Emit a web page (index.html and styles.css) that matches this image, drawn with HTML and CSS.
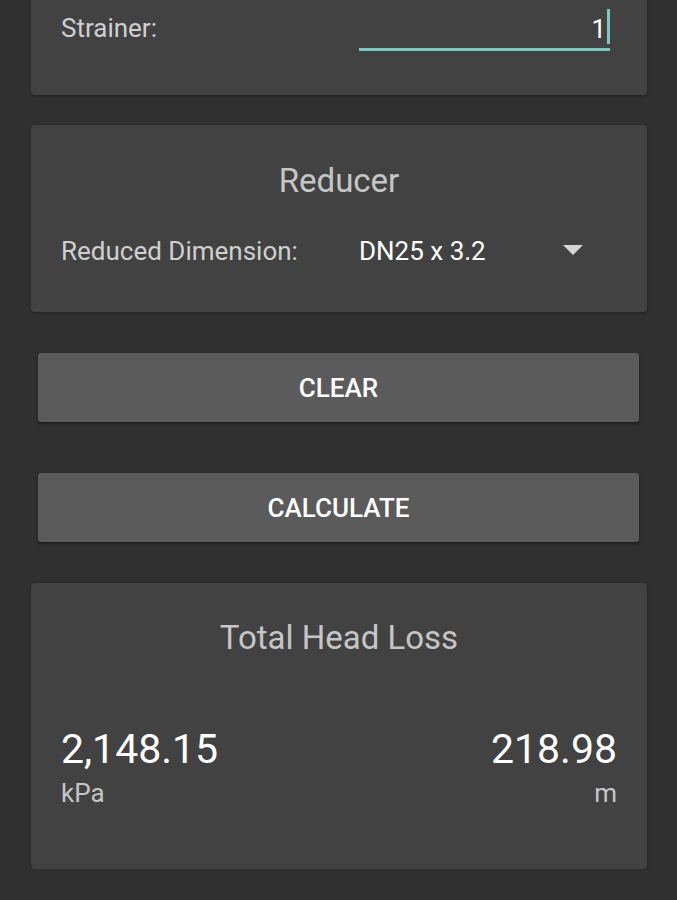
FILE: index.html
```html
<!DOCTYPE html>
<html lang="en">
<head>
  <meta charset="UTF-8" />
  <meta name="viewport" content="width=device-width, initial-scale=1.0" />
  <title>Head Loss</title>
  <link rel="stylesheet" href="styles.css">
</head>
<body>
  <div class="page">
    <div class="card card-fittings">
      <div class="row">
        <label class="label">Strainer:</label>
        <div class="field">
          <span class="field-value">1</span>
          <span class="caret"></span>
        </div>
      </div>
    </div>

    <div class="card card-reducer">
      <h2 class="card-title">Reducer</h2>
      <div class="row">
        <label class="label">Reduced Dimension:</label>
        <div class="spinner">
          <span class="spinner-value">DN25 x 3.2</span>
          <span class="spinner-arrow"></span>
        </div>
      </div>
    </div>

    <button class="btn btn-clear">Clear</button>
    <button class="btn btn-calc">Calculate</button>

    <div class="card card-result">
      <h2 class="card-title">Total Head Loss</h2>
      <div class="results">
        <div class="result">
          <div class="result-value">2,148.15</div>
          <div class="result-unit">kPa</div>
        </div>
        <div class="result result-right">
          <div class="result-value">218.98</div>
          <div class="result-unit">m</div>
        </div>
      </div>
    </div>
  </div>
</body>
</html>
```

FILE: styles.css
```css
body {
  margin: 0;
  background-color: #303030;
  font-family: Roboto, "Noto Sans", sans-serif;
  color: #d2d2d2;
}
.page {
  margin-top: -16px;
  padding: 0 30px 0 31px;
  display: flex;
  flex-direction: column;
}
.card {
  background-color: #424242;
  border-radius: 4px;
  box-shadow: 0 1px 3px rgba(0, 0, 0, 0.35);
  padding: 0 30px;
}
.card-fittings {
  padding-top: 25px;
  padding-bottom: 44px;
}
.card-reducer {
  margin-top: 30px;
  padding-top: 36px;
  padding-bottom: 46px;
}
.card-title {
  margin: 0;
  font-size: 33px;
  line-height: 40px;
  font-weight: 400;
  text-align: center;
  color: #c6c6c6;
}
.row {
  display: grid;
  grid-template-columns: 298px 1fr;
  align-items: start;
}
.card-reducer .row {
  margin-top: 35px;
}
.label {
  font-size: 26px;
  line-height: 30px;
  color: #d0d0d0;
}
.card-fittings .label {
  padding-top: 4px;
}
.field {
  display: flex;
  justify-content: flex-end;
  align-items: flex-end;
  margin-right: 7px;
  padding-bottom: 4px;
  border-bottom: 3px solid #7ccac1;
}
.field-value {
  font-size: 26px;
  line-height: 30px;
  color: #ffffff;
}
.caret {
  width: 3px;
  height: 35px;
  margin-left: 1px;
  background-color: #7ccac1;
}
.spinner {
  display: flex;
  align-items: center;
  justify-content: space-between;
  padding-right: 34px;
}
.spinner-value {
  font-size: 26px;
  line-height: 30px;
  color: #ffffff;
}
.spinner-arrow {
  width: 0;
  height: 0;
  border-left: 10px solid transparent;
  border-right: 10px solid transparent;
  border-top: 10px solid #d6d6d6;
  margin-top: -2px;
}
.btn {
  margin: 41px 8px 0 7px;
  height: 69px;
  background-color: #5b5b5c;
  color: #ffffff;
  border: none;
  border-radius: 3px;
  box-shadow: 0 2px 3px rgba(0, 0, 0, 0.4);
  font-family: Roboto, "Noto Sans", sans-serif;
  font-size: 26px;
  font-weight: 500;
  text-transform: uppercase;
  cursor: pointer;
  padding: 0;
}
.btn-calc {
  margin-top: 51px;
}
.card-result {
  margin-top: 41px;
  padding-top: 35px;
  padding-bottom: 61px;
}
.results {
  display: flex;
  justify-content: space-between;
  margin-top: 67px;
}
.result-right {
  text-align: right;
}
.result-value {
  font-size: 41px;
  line-height: 48px;
  color: #ffffff;
}
.result-unit {
  margin-top: 5px;
  font-size: 26px;
  line-height: 30px;
  color: #c6c6c6;
}
```
